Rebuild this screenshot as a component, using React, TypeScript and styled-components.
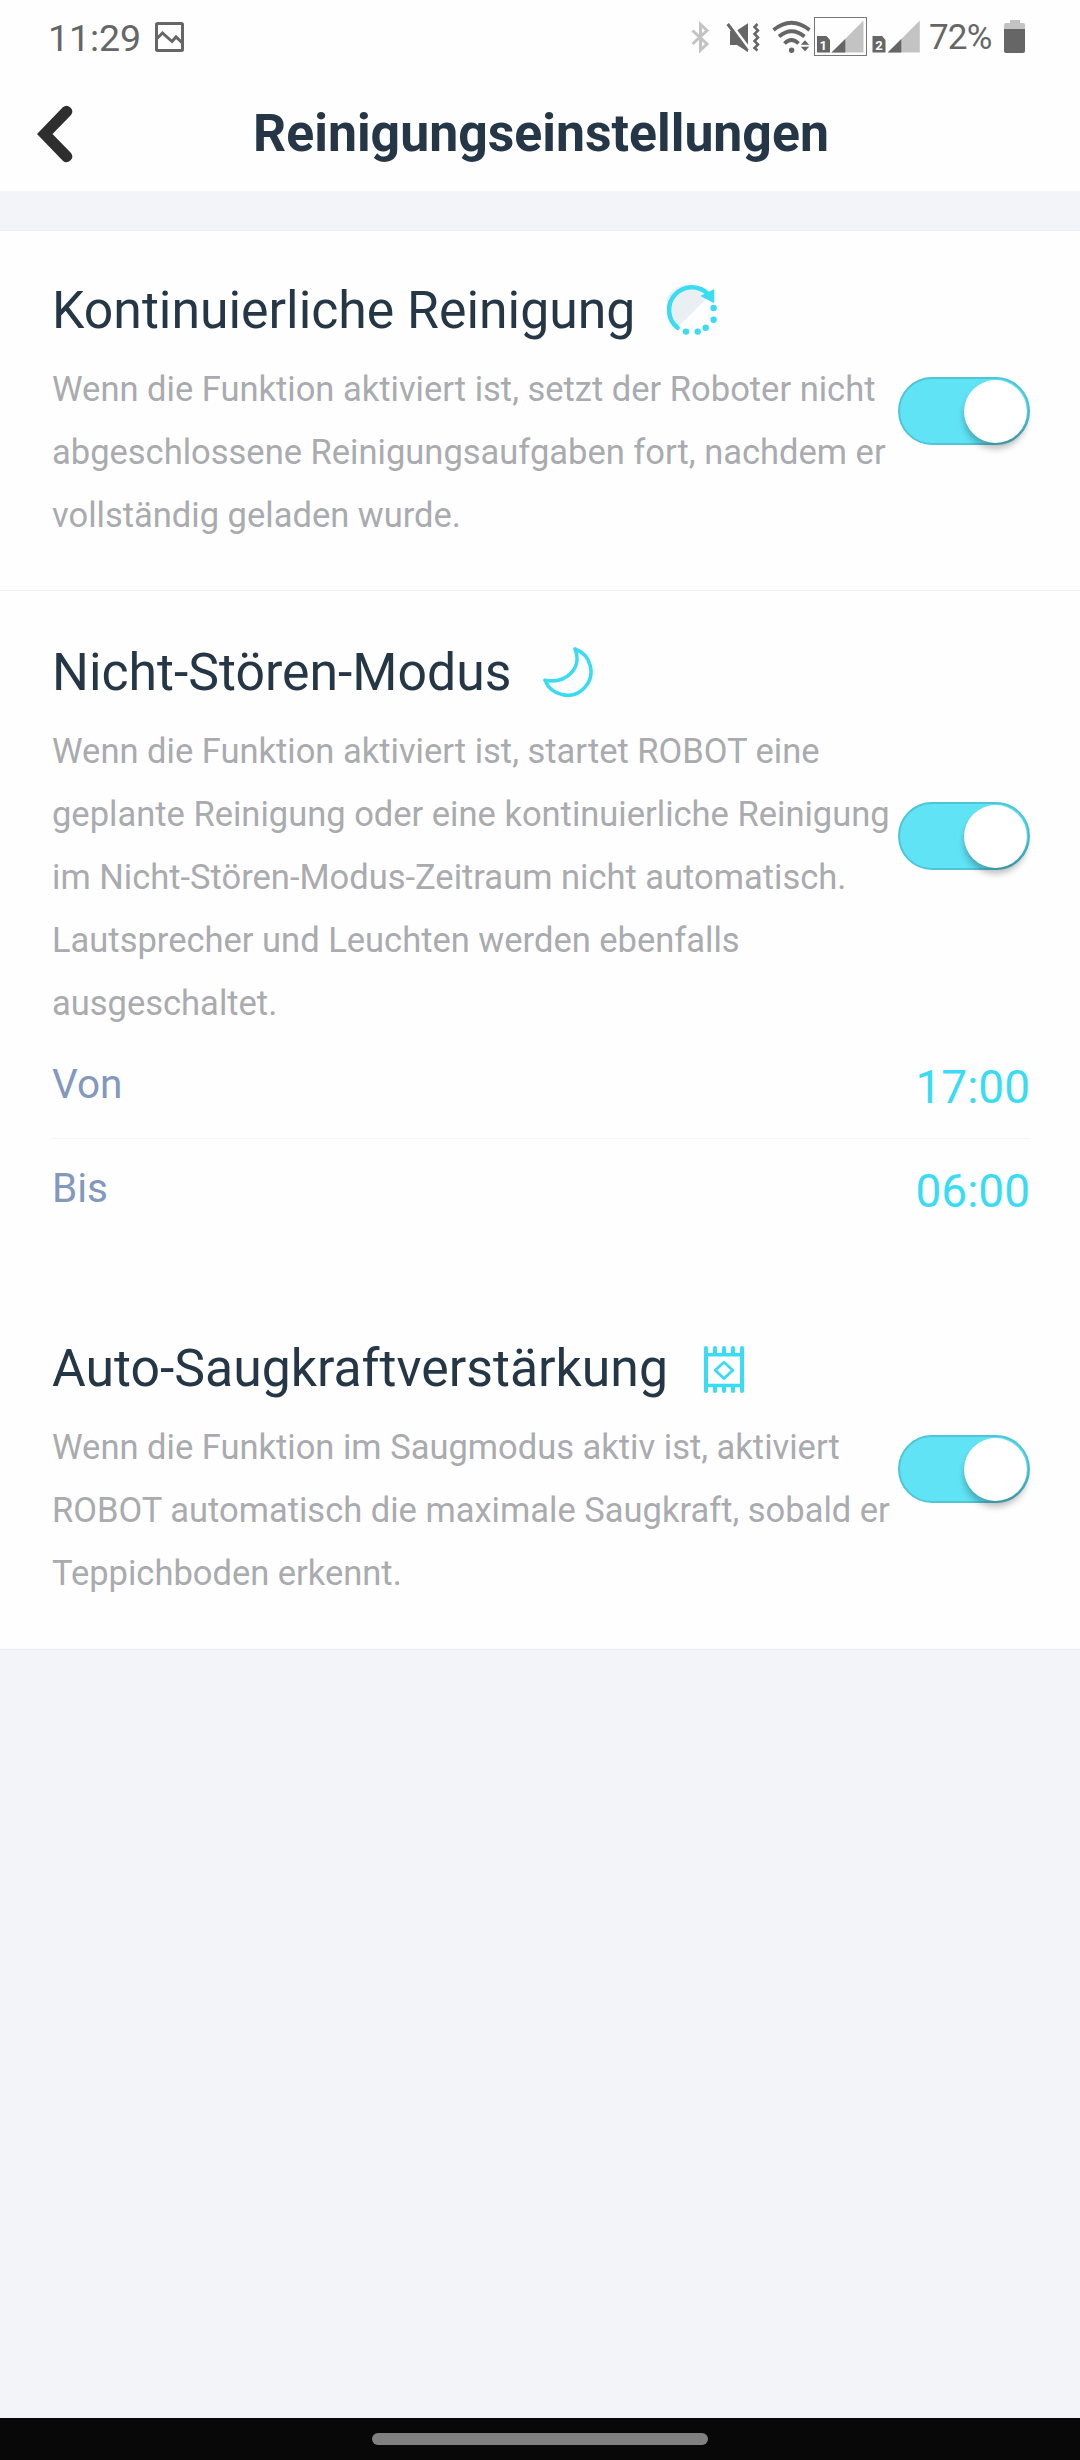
import React from "react";
import styled, { createGlobalStyle } from "styled-components";

const GlobalStyle = createGlobalStyle`
  * { box-sizing: border-box; }
  body { margin: 0; background: #f3f4f9; font-family: Roboto, sans-serif; }
  h1, h2, p { margin: 0; font-weight: 400; }
`;

const Screen = styled.div`
  width: 1080px;
  height: 2460px;
  display: flex;
  flex-direction: column;
  background: #f3f4f9;
  overflow: hidden;
`;

const StatusBar = styled.div`
  height: 76px;
  padding: 0 54px 3px 48px;
  display: flex;
  align-items: center;
  justify-content: space-between;
  background: #fefefe;
  color: #666;
`;

const StatusGroup = styled.div`
  display: flex;
  align-items: center;
  height: 73px;
`;

const Clock = styled.span`
  margin-top: 3px;
  font-size: 37.5px;
  line-height: 70px;
  width: 107px;
  letter-spacing: -0.1px;
  white-space: nowrap;
`;

const Percent = styled.span`
  margin-top: 3px;
  font-size: 35px;
  line-height: 70px;
  width: 75px;
  letter-spacing: -0.8px;
`;

const Header = styled.header`
  height: 115px;
  display: grid;
  grid-template-columns: 111px 1fr 109px;
  align-items: center;
  background: #fefefe;
`;

const BackButton = styled.button`
  height: 115px;
  padding: 0 0 0 37px;
  border: 0;
  background: none;
  display: flex;
  align-items: center;
`;

const PageTitle = styled.h1`
  font-size: 51.75px;
  font-weight: 700;
  line-height: 115px;
  text-align: center;
  color: #253746;
`;

const Settings = styled.main`
  margin-top: 39px;
  border-top: 1px solid #eee;
  border-bottom: 1px solid #ebedf0;
  background: #fefefe;
`;

const Section = styled.section<{ $divided?: boolean; $top: number; $bottom?: number }>`
  padding: ${(p) => p.$top}px 50px ${(p) => p.$bottom ?? 0}px 52px;
  border-bottom: ${(p) => (p.$divided ? "1px solid #ededef" : "0")};
`;

const Setting = styled.div<{ $height: number }>`
  height: ${(p) => p.$height}px;
  display: grid;
  grid-template-columns: 846px 132px;
`;

const TitleRow = styled.div`
  display: flex;
  align-items: center;
  height: 62px;
`;

const Title = styled.h2`
  font-size: 51.75px;
  line-height: 62px;
  color: #253746;
  white-space: nowrap;
`;

const IconSlot = styled.span<{ $gap: number }>`
  display: flex;
  margin-left: ${(p) => p.$gap}px;
  margin-bottom: 2px;
`;

const Description = styled.p`
  margin-top: 16px;
  font-size: 34.5px;
  line-height: 63px;
  color: #a9abaf;
  white-space: pre;
`;

const Track = styled.button<{ $top: number }>`
  width: 132px;
  height: 68px;
  margin: ${(p) => p.$top}px 0 0;
  padding: 1px;
  border: 2px solid #4fc5d6;
  border-radius: 34px;
  background: #5fe3f5;
  display: flex;
  justify-content: flex-end;
`;

const Knob = styled.span`
  width: 63px;
  height: 63px;
  border-radius: 50%;
  background: #fff;
  box-shadow: 0 6px 6px rgba(0, 0, 0, 0.25);
`;

const TimeRow = styled.div<{ $line?: boolean }>`
  height: 104px;
  display: flex;
  justify-content: space-between;
  border-bottom: ${(p) => (p.$line ? "1px solid #f5f5f6" : "0")};
`;

const TimeLabel = styled.span`
  font-size: 40.5px;
  line-height: 98px;
  color: #8298bc;
`;

const TimeValue = styled.span`
  font-size: 46px;
  line-height: 104px;
  color: #3adcf3;
`;

const NavBar = styled.footer`
  margin-top: auto;
  height: 42px;
  display: flex;
  justify-content: center;
  padding-top: 15px;
  background: #080808;
`;

const NavHandle = styled.span`
  width: 336px;
  height: 12px;
  border-radius: 6px;
  background: #808080;
`;

const Picture = () => (
  <svg width="29" height="30" viewBox="0 0 29 30" fill="none" stroke="#666" strokeWidth="3">
    <rect x="1.500" y="1.500" width="26" height="27" rx="1" />
    <path d="M2 16.500 7.500 11 17 19.500 21 15 28 21.500" />
  </svg>
);

const StatusIcons = () => (
  <svg width="240" height="43" viewBox="0 0 240 43">
    <path d="M3.500 15.500 18 29 11.500 35V9.500L18 15.500 3.500 29" fill="none" stroke="#c3c3c3" strokeWidth="3" />
    <path d="M41 16h6L59 8.300V37L48 30h-7z" fill="#666" />
    <path d="M40.500 7.500 61.500 36" stroke="#fefefe" strokeWidth="3.500" />
    <path d="M38.700 9 58.500 35.700" stroke="#666" strokeWidth="3" />
    <path
      d="m68.500 9-3 3 3.500 3.500-3.500 3.500 3.500 3.500-3.500 3.500 3.500 3.500-3.500 3.500 3 2.500"
      fill="none"
      stroke="#666"
      strokeWidth="2.500"
    />
    <g fill="none" stroke="#666" strokeWidth="3.800">
      <path d="M84.500 15Q102.500 0.500 120.500 15" />
      <path d="M90 21.500Q102.500 11 115.500 21.500" />
      <path d="M95.500 28.500Q102.500 21.500 109.500 28.500" />
    </g>
    <circle cx="102.600" cy="35.200" r="2.700" fill="#666" />
    <path d="m111.800 29.800 4.200-4.500 4.200 4.500zM111.800 31.700h8.400L116 36.200z" fill="#666" />
    <rect x="125.500" y="2.500" width="52" height="38" fill="none" stroke="#777" />
    <path d="M174.500 5.500v32H142.500z" fill="#c3c3c3" />
    <path d="M156.300 24v13.500H142.500z" fill="#666" />
    <path d="M128 21h9.500l3.500 4v12.500h-13z" fill="#666" />
    <path d="M230.800 5.500v32h-32z" fill="#c3c3c3" />
    <path d="M212.300 24v13.500h-13.600z" fill="#666" />
    <path d="M183.500 21h9.500l3.500 4v12.500h-13z" fill="#666" />
    <text x="134.300" y="34.500" textAnchor="middle" fontSize="13" fontWeight="700" fill="#fefefe">1</text>
    <text x="190" y="34.500" textAnchor="middle" fontSize="13" fontWeight="700" fill="#fefefe">2</text>
  </svg>
);

const Battery = () => (
  <svg width="22" height="33" viewBox="0 0 22 33">
    <path d="M0 10V5q0-2 2-2h4V0h10v3h3q2 0 2 2v5z" fill="#c3c3c3" />
    <path d="M0 9h21v22q0 2-2 2H2q-2 0-2-2z" fill="#666" />
  </svg>
);

const Back = () => (
  <svg width="38" height="60" viewBox="0 0 38 60" fill="#2e2e2e">
    <path d="M0 30 25.800 3.300A5.700 5.700 0 0 1 34 11.100L15.500 30 34 48.900A5.700 5.700 0 0 1 25.800 56.700z" />
  </svg>
);

const Cycle = () => (
  <svg width="50" height="50" viewBox="0 0 50 50">
    <path d="M12 41A21 21 0 1 1 39 14z" fill="#eaeff3" />
    <path
      d="M10.500 42.800A22.800 22.800 0 1 1 40.500 8.500"
      fill="none"
      stroke="#3adcf3"
      strokeWidth="4.500"
      strokeLinecap="round"
    />
    <path d="M46.700 5v12.300L34.500 11z" fill="#3adcf3" stroke="#3adcf3" strokeWidth="1.200" strokeLinejoin="round" />
    <g fill="#3adcf3">
      <circle cx="46.600" cy="23" r="3.200" />
      <circle cx="46.600" cy="34.700" r="3.200" />
      <circle cx="38.700" cy="42.700" r="3.200" />
      <circle cx="30.700" cy="46.600" r="3.200" />
      <circle cx="19" cy="46.600" r="3.200" />
    </g>
  </svg>
);

const Moon = () => (
  <svg
    width="50"
    height="50"
    viewBox="0 0 50 50"
    fill="none"
    stroke="#3adcf3"
    strokeWidth="3.600"
    strokeLinejoin="round"
  >
    <path d="M32 2A23.800 23.800 0 1 1 2 33.200C23 37 40 21 32 2z" />
  </svg>
);

const Carpet = () => (
  <svg width="40" height="49" viewBox="0 -2 40 49" fill="none" stroke="#3adcf3" strokeWidth="4" strokeLinecap="round">
    <path d="M2 2v43M38 2v43M11 2v5M20 2v5M29 2v5M11 40v5M20 40v5M29 40v5" />
    <path d="M2 8.800h36M2 39.500h36" strokeWidth="3.600" />
    <path d="m20 16.200 8.800 8.100-8.800 8.200-8.800-8.200z" strokeWidth="2.800" strokeLinejoin="round" />
  </svg>
);

const Switch = ({ top }: { top: number }) => (
  <Track $top={top} role="switch" aria-checked="true">
    <Knob />
  </Track>
);

type SettingItemProps = {
  title: string;
  text: string;
  icon: React.ReactNode;
  iconGap: number;
  height: number;
  switchTop: number;
};

const SettingItem = ({ title, text, icon, iconGap, height, switchTop }: SettingItemProps) => (
  <Setting $height={height}>
    <div>
      <TitleRow>
        <Title>{title}</Title>
        <IconSlot $gap={iconGap}>{icon}</IconSlot>
      </TitleRow>
      <Description>{text}</Description>
    </div>
    <Switch top={switchTop} />
  </Setting>
);

export default function App() {
  return (
    <Screen>
      <GlobalStyle />
      <StatusBar>
        <StatusGroup>
          <Clock>11:29</Clock>
          <Picture />
        </StatusGroup>
        <StatusGroup>
          <StatusIcons />
          <Percent>72%</Percent>
          <Battery />
        </StatusGroup>
      </StatusBar>
      <Header>
        <BackButton aria-label="Zurück">
          <Back />
        </BackButton>
        <PageTitle>Reinigungseinstellungen</PageTitle>
      </Header>
      <Settings>
        <Section $divided $top={49}>
          <SettingItem
            title="Kontinuierliche Reinigung"
            text={"Wenn die Funktion aktiviert ist, setzt der Roboter nicht\nabgeschlossene Reinigungsaufgaben fort, nachdem er\nvollständig geladen wurde."}
            icon={<Cycle />}
            iconGap={32}
            height={310}
            switchTop={97}
          />
        </Section>
        <Section $top={51} $bottom={44}>
          <SettingItem
            title="Nicht-Stören-Modus"
            text={"Wenn die Funktion aktiviert ist, startet ROBOT eine\ngeplante Reinigung oder eine kontinuierliche Reinigung\nim Nicht-Stören-Modus-Zeitraum nicht automatisch.\nLautsprecher und Leuchten werden ebenfalls\nausgeschaltet."}
            icon={<Moon />}
            iconGap={32}
            height={393}
            switchTop={160}
          />
          <TimeRow $line>
            <TimeLabel>Von</TimeLabel>
            <TimeValue>17:00</TimeValue>
          </TimeRow>
          <TimeRow>
            <TimeLabel>Bis</TimeLabel>
            <TimeValue>06:00</TimeValue>
          </TimeRow>
        </Section>
        <Section $top={51}>
          <SettingItem
            title="Auto-Saugkraftverstärkung"
            text={"Wenn die Funktion im Saugmodus aktiv ist, aktiviert\nROBOT automatisch die maximale Saugkraft, sobald er\nTeppichboden erkennt."}
            icon={<Carpet />}
            iconGap={36}
            height={311}
            switchTop={97}
          />
        </Section>
      </Settings>
      <NavBar>
        <NavHandle />
      </NavBar>
    </Screen>
  );
}
